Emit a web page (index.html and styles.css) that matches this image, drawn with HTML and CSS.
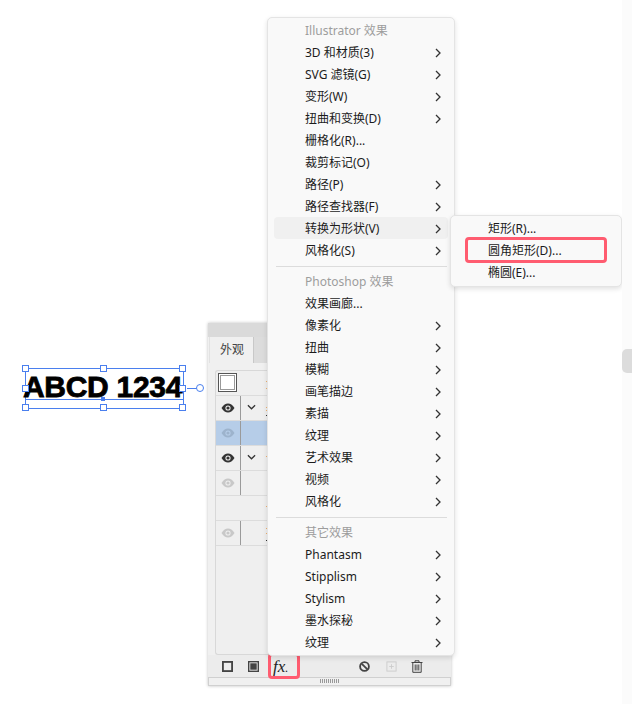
FILE: index.html
```html
<!DOCTYPE html>
<html lang="zh-CN">
<head>
  <meta charset="UTF-8">
  <title>Illustrator 效果</title>
  <link rel="stylesheet" href="styles.css">
</head>
<body>
  <div class="canvas">
    <div class="selection">
      <span class="sample">ABCD 1234</span>
      <i class="baseline"></i>
      <i class="centre-dot"></i>
      <i class="handle h-tl"></i><i class="handle h-tc"></i><i class="handle h-tr"></i>
      <i class="handle h-ml"></i><i class="handle h-mr"></i>
      <i class="handle h-bl"></i><i class="handle h-bc"></i><i class="handle h-br"></i>
      <i class="arm"></i><i class="knob"></i>
    </div>

    <div class="panel">
      <div class="panel-top"></div>
      <div class="tabs"><div class="tab">外观</div><div class="tab-rest"></div></div>
      <div class="list">
        <div class="row"><span class="swatch"></span></div>
        <div class="row">
          <span class="eye-cell"><svg class="eye" viewBox="0 0 14 10"><path d="M0.5 5C2.5 1.8 4.6 0.5 7 0.5S11.5 1.8 13.5 5C11.5 8.2 9.4 9.5 7 9.5S2.5 8.2 0.5 5Z" fill="#333"/><circle cx="7" cy="5" r="2.6" fill="#eee"/><circle cx="7" cy="5" r="1.6" fill="#333"/></svg></span>
          <span class="cell"><svg class="chev" viewBox="0 0 10 6"><path d="M1 1L5 5L9 1" fill="none" stroke="#333" stroke-width="1.4"/></svg></span>
        </div>
        <div class="row row-active">
          <span class="eye-cell"><svg class="eye" viewBox="0 0 14 10"><path d="M0.5 5C2.5 1.8 4.6 0.5 7 0.5S11.5 1.8 13.5 5C11.5 8.2 9.4 9.5 7 9.5S2.5 8.2 0.5 5Z" fill="#9db3cc"/><circle cx="7" cy="5" r="2.6" fill="#b6cde8"/><circle cx="7" cy="5" r="1.6" fill="#9db3cc"/></svg></span>
          <span class="cell"></span>
        </div>
        <div class="row">
          <span class="eye-cell"><svg class="eye" viewBox="0 0 14 10"><path d="M0.5 5C2.5 1.8 4.6 0.5 7 0.5S11.5 1.8 13.5 5C11.5 8.2 9.4 9.5 7 9.5S2.5 8.2 0.5 5Z" fill="#333"/><circle cx="7" cy="5" r="2.6" fill="#eee"/><circle cx="7" cy="5" r="1.6" fill="#333"/></svg></span>
          <span class="cell"><svg class="chev" viewBox="0 0 10 6"><path d="M1 1L5 5L9 1" fill="none" stroke="#333" stroke-width="1.4"/></svg></span>
        </div>
        <div class="row">
          <span class="eye-cell"><svg class="eye" viewBox="0 0 14 10"><path d="M0.5 5C2.5 1.8 4.6 0.5 7 0.5S11.5 1.8 13.5 5C11.5 8.2 9.4 9.5 7 9.5S2.5 8.2 0.5 5Z" fill="#c8c8c8"/><circle cx="7" cy="5" r="2.6" fill="#eee"/><circle cx="7" cy="5" r="1.6" fill="#c8c8c8"/></svg></span>
          <span class="cell"></span>
        </div>
        <div class="row"></div>
        <div class="row">
          <span class="eye-cell"><svg class="eye" viewBox="0 0 14 10"><path d="M0.5 5C2.5 1.8 4.6 0.5 7 0.5S11.5 1.8 13.5 5C11.5 8.2 9.4 9.5 7 9.5S2.5 8.2 0.5 5Z" fill="#c8c8c8"/><circle cx="7" cy="5" r="2.6" fill="#eee"/><circle cx="7" cy="5" r="1.6" fill="#c8c8c8"/></svg></span>
          <span class="cell"></span>
        </div>
      </div>
      <div class="toolbar">
        <svg class="tool" viewBox="0 0 12 12"><rect x="1" y="1" width="10" height="10" fill="none" stroke="#444" stroke-width="2"/></svg>
        <svg class="tool tool-fill" viewBox="0 0 12 12"><rect x="0.75" y="0.75" width="10.5" height="10.5" fill="none" stroke="#444" stroke-width="1.5"/><rect x="2.5" y="2.5" width="7" height="7" fill="#444"/></svg>
        <span class="fx">fx<small>.</small></span>
        <span class="tool-gap"></span>
        <svg class="tool tool-no" viewBox="0 0 12 12"><circle cx="6" cy="6" r="4.8" fill="none" stroke="#444" stroke-width="2"/><path d="M2.8 2.8L9.2 9.2" stroke="#444" stroke-width="2"/></svg>
        <svg class="tool tool-plus" viewBox="0 0 12 12"><rect x="1" y="1" width="10" height="10" fill="none" stroke="#ccc"/><path d="M6 3.5V8.5M3.5 6H8.5" stroke="#ccc"/></svg>
        <svg class="tool tool-bin" viewBox="0 0 12 13"><path d="M0.5 2.5H11.5M4 2.5V0.8H8V2.5M1.8 2.5V12.3H10.2V2.5M4.2 4.5V10.5M6 4.5V10.5M7.8 4.5V10.5" fill="none" stroke="#444"/></svg>
      </div>
      <div class="grip"><i></i></div>
    </div>

    <i class="peek"></i>
    <div class="fx-mark"></div>

    <div class="menu">
      <div class="item item-title">Illustrator 效果</div>
      <div class="item">3D 和材质(3)<svg class="arrow" viewBox="0 0 6 10"><path d="M1 1L5 5L1 9"/></svg></div>
      <div class="item">SVG 滤镜(G)<svg class="arrow" viewBox="0 0 6 10"><path d="M1 1L5 5L1 9"/></svg></div>
      <div class="item">变形(W)<svg class="arrow" viewBox="0 0 6 10"><path d="M1 1L5 5L1 9"/></svg></div>
      <div class="item">扭曲和变换(D)<svg class="arrow" viewBox="0 0 6 10"><path d="M1 1L5 5L1 9"/></svg></div>
      <div class="item">栅格化(R)...</div>
      <div class="item">裁剪标记(O)</div>
      <div class="item">路径(P)<svg class="arrow" viewBox="0 0 6 10"><path d="M1 1L5 5L1 9"/></svg></div>
      <div class="item">路径查找器(F)<svg class="arrow" viewBox="0 0 6 10"><path d="M1 1L5 5L1 9"/></svg></div>
      <div class="item item-open">转换为形状(V)<svg class="arrow" viewBox="0 0 6 10"><path d="M1 1L5 5L1 9"/></svg></div>
      <div class="item">风格化(S)<svg class="arrow" viewBox="0 0 6 10"><path d="M1 1L5 5L1 9"/></svg></div>
      <div class="sep"></div>
      <div class="item item-title">Photoshop 效果</div>
      <div class="item">效果画廊...</div>
      <div class="item">像素化<svg class="arrow" viewBox="0 0 6 10"><path d="M1 1L5 5L1 9"/></svg></div>
      <div class="item">扭曲<svg class="arrow" viewBox="0 0 6 10"><path d="M1 1L5 5L1 9"/></svg></div>
      <div class="item">模糊<svg class="arrow" viewBox="0 0 6 10"><path d="M1 1L5 5L1 9"/></svg></div>
      <div class="item">画笔描边<svg class="arrow" viewBox="0 0 6 10"><path d="M1 1L5 5L1 9"/></svg></div>
      <div class="item">素描<svg class="arrow" viewBox="0 0 6 10"><path d="M1 1L5 5L1 9"/></svg></div>
      <div class="item">纹理<svg class="arrow" viewBox="0 0 6 10"><path d="M1 1L5 5L1 9"/></svg></div>
      <div class="item">艺术效果<svg class="arrow" viewBox="0 0 6 10"><path d="M1 1L5 5L1 9"/></svg></div>
      <div class="item">视频<svg class="arrow" viewBox="0 0 6 10"><path d="M1 1L5 5L1 9"/></svg></div>
      <div class="item">风格化<svg class="arrow" viewBox="0 0 6 10"><path d="M1 1L5 5L1 9"/></svg></div>
      <div class="sep"></div>
      <div class="item item-title">其它效果</div>
      <div class="item">Phantasm<svg class="arrow" viewBox="0 0 6 10"><path d="M1 1L5 5L1 9"/></svg></div>
      <div class="item">Stipplism<svg class="arrow" viewBox="0 0 6 10"><path d="M1 1L5 5L1 9"/></svg></div>
      <div class="item">Stylism<svg class="arrow" viewBox="0 0 6 10"><path d="M1 1L5 5L1 9"/></svg></div>
      <div class="item">墨水探秘<svg class="arrow" viewBox="0 0 6 10"><path d="M1 1L5 5L1 9"/></svg></div>
      <div class="item">纹理<svg class="arrow" viewBox="0 0 6 10"><path d="M1 1L5 5L1 9"/></svg></div>
    </div>

    <div class="menu submenu">
      <div class="item">矩形(R)...</div>
      <div class="item item-marked">圆角矩形(D)...</div>
      <div class="item">椭圆(E)...</div>
    </div>

    <div class="scroll-track"><div class="scroll-thumb"></div></div>
  </div>
</body>
</html>
```

FILE: styles.css
```css
body {
  margin: 0;
  background: #fff;
  font-family: "Noto Sans", "Noto Sans CJK SC", sans-serif;
  font-size: 12px;
  color: #1c1c1c;
}
.canvas {
  position: relative;
  width: 632px;
  height: 704px;
  overflow: hidden;
}

/* selected text on the artboard */
.selection {
  position: absolute;
  left: 25px;
  top: 368px;
  width: 157px;
  height: 39px;
  border: 1px solid #4a7fee;
}
.sample {
  position: absolute;
  left: -3px;
  top: -1px;
  width: 157px;
  text-align: center;
  font-family: "Liberation Sans", sans-serif;
  font-weight: bold;
  font-size: 30px;
  line-height: 38px;
  letter-spacing: -0.3px;
  white-space: nowrap;
  color: #000;
  -webkit-text-stroke: 0.8px #000;
}
.baseline {
  position: absolute;
  left: 0;
  right: 0;
  top: 30px;
  height: 1px;
  background: #4a7fee;
}
.centre-dot {
  position: absolute;
  left: 75px;
  top: 28px;
  width: 4px;
  height: 4px;
  background: #4a7fee;
}
.handle {
  position: absolute;
  width: 5px;
  height: 5px;
  margin: -4px 0 0 -4px;
  background: #fff;
  border: 1px solid #4a7fee;
}
.h-tl { left: 0; top: 0; }
.h-tc { left: 78px; top: 0; }
.h-tr { left: 157px; top: 0; }
.h-ml { left: 0; top: 20px; }
.h-mr { left: 157px; top: 20px; }
.h-bl { left: 0; top: 39px; }
.h-bc { left: 78px; top: 39px; }
.h-br { left: 157px; top: 39px; }
.arm {
  position: absolute;
  left: 161px;
  top: 19px;
  width: 11px;
  height: 1px;
  background: #4a7fee;
}
.knob {
  position: absolute;
  left: 170px;
  top: 15px;
  width: 6px;
  height: 6px;
  background: #fff;
  border: 1px solid #4a7fee;
  border-radius: 50%;
}

/* appearance panel */
.panel {
  position: absolute;
  left: 208px;
  top: 323px;
  width: 243px;
  height: 363px;
  display: flex;
  flex-direction: column;
  background: #f0f0f0;
  box-shadow: 0 0 3px rgba(0,0,0,0.25);
}
.panel-top {
  height: 14px;
  background: #dadada;
}
.tabs {
  display: flex;
  height: 26px;
  padding-left: 1px;
  background: #f0f0f0;
}
.tab {
  width: 44px;
  padding-left: 10px;
  box-sizing: border-box;
  line-height: 26px;
  color: #444;
  background: #f0f0f0;
  border-left: 1px solid #e2e2e2;
}
.tab-rest {
  flex: 1;
  background: #dcdcdc;
  border-left: 1px solid #c8c8c8;
}
.list {
  flex: 1;
  margin: 7px 0 0 7px;
  background: #efefef;
  border: 1px solid #d8d8d8;
  border-right: none;
  border-radius: 3px 0 0 3px;
  display: flex;
  flex-direction: column;
}
.row {
  height: 25px;
  box-sizing: border-box;
  display: flex;
  border-bottom: 1px solid #dcdcdc;
}
.row-active {
  background: #b6cde8;
}
.swatch {
  width: 17px;
  height: 17px;
  margin: 2px 0 0 2px;
  border: 1px solid #555;
  background: #fff;
  box-shadow: inset 0 0 0 1px #fff, inset 0 0 0 2px #999;
}
.eye-cell {
  width: 24px;
  display: flex;
  align-items: center;
  justify-content: center;
  border-right: 1px solid #9a9a9a;
}
.cell {
  width: 21px;
  display: flex;
  align-items: center;
  justify-content: center;
}
.eye {
  width: 14px;
  height: 10px;
}
.chev {
  width: 9px;
  height: 6px;
  margin-top: -3px;
}
.toolbar {
  height: 22px;
  display: flex;
  align-items: center;
  padding: 1px 28px 0 14px;
  box-sizing: border-box;
  background: #ececec;
}
.tool {
  width: 11px;
  height: 11px;
  margin-right: 15px;
  flex: none;
}
.tool-no {
  margin-right: 16px;
}
.tool-plus {
  margin-right: 14px;
}
.tool-bin {
  width: 12px;
  height: 13px;
  margin-right: 0;
}
.fx {
  font-family: "Liberation Serif", serif;
  font-style: italic;
  font-size: 17px;
  color: #222;
  margin-left: -1px;
}
.fx small {
  font-size: 12px;
}
.tool-gap {
  flex: 1;
}
.grip {
  height: 7px;
  background: #f0f0f0;
  border: 1px solid #d0d0d0;
  display: flex;
  justify-content: center;
}
.grip i {
  width: 20px;
  margin-top: 1px;
  height: 4px;
  background: repeating-linear-gradient(to right, #999 0, #999 1px, transparent 1px, transparent 2px);
}
/* tips of the clipped row labels, just left of the menu edge */
.peek {
  position: absolute;
  left: 266px;
  top: 381px;
  width: 1px;
  height: 1px;
  background: #f0b070;
  box-shadow: 0 7px #f0b070, 0 26px #f0b070, 0 29px #f0b070, 0 34px #333,
    0 75px #f0b070, 0 125px #f0b070, 0 147px #f0b070, 0 152px #f0b070, 0 159px #333;
}
.fx-mark {
  position: absolute;
  left: 268px;
  top: 653px;
  width: 32px;
  height: 26px;
  box-sizing: border-box;
  border: 3px solid #ff5c70;
  border-radius: 4px;
}

/* context menus */
.menu {
  position: absolute;
  left: 267px;
  top: 17px;
  width: 188px;
  height: 639px;
  box-sizing: border-box;
  padding: 1px 6px;
  background: #f9f9f9;
  border: 1px solid #e4e4e4;
  border-radius: 5px;
  box-shadow: 0 2px 5px rgba(0,0,0,0.12);
}
.submenu {
  left: 450px;
  top: 215px;
  width: 172px;
  height: 72px;
}
.item {
  height: 22px;
  display: flex;
  align-items: center;
  justify-content: space-between;
  padding: 0 7px 0 31px;
  box-sizing: border-box;
  border-radius: 4px;
  white-space: nowrap;
}
.item-title {
  color: #9d9d9d;
}
.item-open {
  background: #f0f0f0;
}
.submenu .item-marked {
  outline: 3px solid #ff5c70;
  outline-offset: -1px;
  margin: 0 10px;
  padding-left: 21px;
  border-radius: 2px;
}
.arrow {
  width: 6px;
  height: 10px;
  margin-top: 2px;
  fill: none;
  stroke: #333;
  stroke-width: 1.3;
}
.sep {
  height: 1px;
  margin: 5px 1px 3px 2px;
  background: #dcdcdc;
}
.scroll-track {
  position: absolute;
  left: 622px;
  top: 0;
  width: 10px;
  height: 704px;
  background: #fbfbfb;
}
.scroll-thumb {
  margin-top: 349px;
  height: 24px;
  background: #dcdcdc;
  border-radius: 5px 0 0 5px;
}
```
